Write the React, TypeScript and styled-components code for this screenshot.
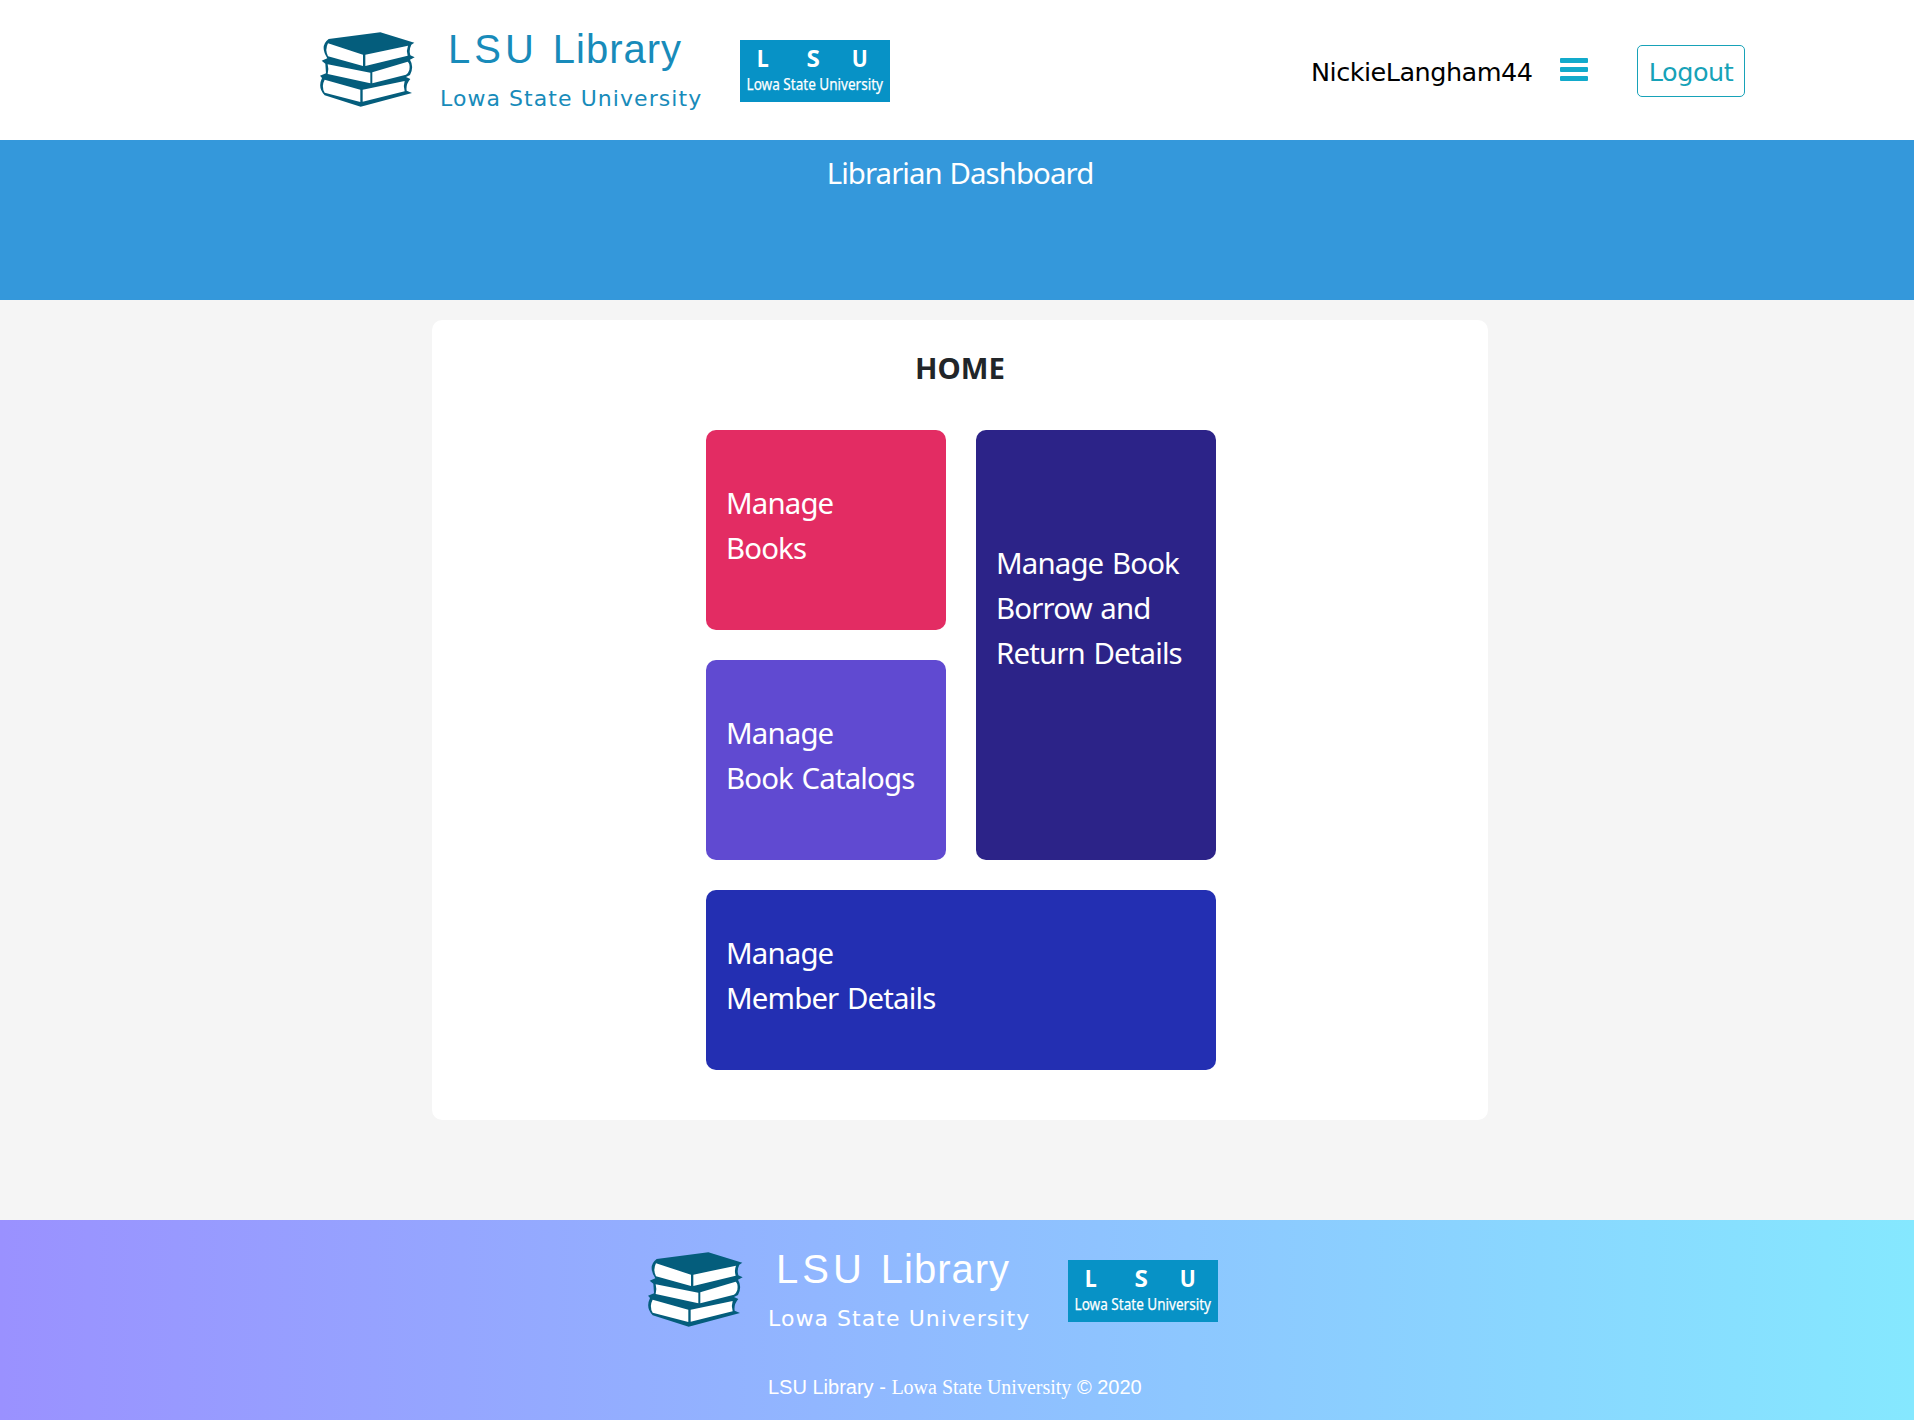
import React from 'react';
import styled, { createGlobalStyle } from 'styled-components';

const GlobalStyle = createGlobalStyle`
  * { box-sizing: border-box; }
  body { margin: 0; background: #f5f5f5; font-family: "Noto Sans", sans-serif; }
`;

const Page = styled.div`
  width: 1914px;
  height: 1420px;
  display: flex;
  flex-direction: column;
  overflow: hidden;
`;

const Header = styled.header`
  height: 140px;
  background: #fff;
  display: flex;
  justify-content: space-between;
  padding: 0 169px 0 320px;
`;

const BrandRow = styled.div`
  height: 140px;
  display: flex;
  align-items: flex-start;
`;

const Books = styled.svg`
  width: 96px;
  height: 78px;
  margin-top: 30px;
  flex: none;
`;

const BrandText = styled.div<{ $color: string }>`
  width: 300px;
  margin-left: 24px;
  padding-top: 26px;
  color: ${(p) => p.$color};
  white-space: nowrap;
`;

const BrandName = styled.div`
  display: flex;
  gap: 15px;
  padding-left: 8px;
  font: 40px/46px "Liberation Sans", Arial, sans-serif;
  letter-spacing: 1px;
`;

const Initials = styled.span`
  letter-spacing: 4px;
`;

const BrandSub = styled.div`
  margin-top: 14px;
  font: 22px/26px "DejaVu Sans", Verdana, sans-serif;
  letter-spacing: 1.06px;
`;

const BadgeSvg = styled.svg`
  width: 150px;
  height: 62px;
  margin-top: 40px;
  flex: none;
  overflow: visible;
  font-family: "Noto Sans", sans-serif;
`;

const Account = styled.div`
  display: flex;
  align-items: flex-start;
  padding-top: 45px;
  font: 25.5px/50px "DejaVu Sans", Verdana, sans-serif;
  letter-spacing: -0.5px;
`;

const UserName = styled.span`
  width: 249px;
  padding-top: 2px;
  color: #000;
`;

const MenuIcon = styled.svg`
  width: 28px;
  height: 23px;
  margin-top: 13px;
`;

const Logout = styled.button`
  width: 108px;
  height: 52px;
  margin-left: 49px;
  padding: 1px 0 0;
  border: 1px solid #17a2b8;
  border-radius: 5px;
  background: #fff;
  color: #17a2b8;
  font: inherit;
  letter-spacing: inherit;
`;

const Banner = styled.div`
  height: 160px;
  padding: 11px 0 0 6px;
  background: #3498db;
  color: #fff;
  text-align: center;
  font-size: 29.4px;
  line-height: 45px;
  letter-spacing: -0.93px;
  word-spacing: 1px;
`;

const Main = styled.main`
  height: 920px;
  padding: 20px 0 0 432px;
`;

const Card = styled.section`
  width: 1056px;
  height: 800px;
  border-radius: 10px;
  background: #fff;
`;

const Title = styled.h1`
  margin: 0;
  padding-top: 26px;
  height: 110px;
  text-align: center;
  color: #212529;
  font-size: 29.4px;
  line-height: 45px;
  font-weight: 700;
`;

const Tiles = styled.div`
  display: grid;
  grid-template-columns: 240px 240px;
  grid-template-rows: 200px 200px 180px;
  gap: 30px;
  padding-left: 274px;
`;

const Tile = styled.a<{ $bg: string; $top: number; $area: string }>`
  grid-area: ${(p) => p.$area};
  padding: ${(p) => p.$top}px 0 0 20px;
  border-radius: 10px;
  background: ${(p) => p.$bg};
  color: #fff;
  font-size: 29.4px;
  line-height: 45px;
  letter-spacing: -0.85px;
  word-spacing: 1.8px;
  white-space: pre-line;
`;

const Footer = styled.footer`
  height: 200px;
  display: flex;
  flex-direction: column;
  padding-left: 648px;
  background: linear-gradient(to right, #9a91ff, #85e8ff);
`;

const Copyright = styled.p`
  margin: 0;
  padding: 15px 0 0 120px;
  color: #fff;
  font: 20px/24px "Liberation Sans", Arial, sans-serif;
`;

const Serif = styled.span`
  font-family: "Liberation Serif", "Times New Roman", serif;
`;

const tiles = [
  { label: 'Manage\nBooks', bg: '#e32c63', top: 51, area: '1 / 1' },
  { label: 'Manage Book\nBorrow and\nReturn Details', bg: '#2c2388', top: 111, area: '1 / 2 / 3 / 3' },
  { label: 'Manage\nBook Catalogs', bg: '#604ad1', top: 51, area: '2 / 1' },
  { label: 'Manage\nMember Details', bg: '#232fb2', top: 41, area: '3 / 1 / 4 / 3' },
];

function BooksIcon() {
  return (
    <Books viewBox="30 30 288 234">
      <path
        fill="#045d7c"
        d="M56 57 L211 37 L313 68 L304 74 Q296 90 301 106 L314 112 L300 119 Q313 140 300 165 L288 171 L301 177 Q287 193 290 212 L306 219 L152 260 L44 226 Q22 204 36 174 L30 167 L48 160 L46 131 L35 122 L52 115 Q28 78 56 57 Z"
      />
      <g fill="#fff">
        <path d="M54 70 L159 104 L159 138 L54 109 Q44 89 54 70 Z" />
        <path d="M166 104 L294 77 Q288 92 293 107 L166 138 Z" />
        <path d="M53 133 L181 158 L181 190 L53 162 Q57 147 53 133 Z" />
        <path d="M187 157 L293 125 Q301 130 298 150 Q295 160 288 164 L187 190 Z" />
        <path d="M44 179 L151 209 L151 246 L44 218 Q33 199 44 179 Z" />
        <path d="M158 209 L284 183 Q279 198 284 214 L158 245 Z" />
      </g>
    </Books>
  );
}

function Badge() {
  return (
    <BadgeSvg viewBox="0 0 150 62">
      <rect width="150" height="62" fill="#0792c6" />
      <g fill="#fff">
        <g fontSize="22.5" fontWeight="700">
          <text x="16.8" y="26.8" textLength="12" lengthAdjust="spacingAndGlyphs">L</text>
          <text x="66.5" y="26.8" textLength="13.4" lengthAdjust="spacingAndGlyphs">S</text>
          <text x="111.8" y="26.8" textLength="16" lengthAdjust="spacingAndGlyphs">U</text>
        </g>
        <text
          x="6.6"
          y="50.4"
          fontSize="17"
          textLength="136.4"
          lengthAdjust="spacingAndGlyphs"
          stroke="#fff"
          strokeWidth="0.25"
        >
          Lowa State University
        </text>
      </g>
    </BadgeSvg>
  );
}

function Brand({ color }: { color: string }) {
  return (
    <BrandRow>
      <BooksIcon />
      <BrandText $color={color}>
        <BrandName>
          <Initials>LSU</Initials>
          <span>Library</span>
        </BrandName>
        <BrandSub>Lowa State University</BrandSub>
      </BrandText>
      <Badge />
    </BrandRow>
  );
}

export default function App() {
  return (
    <Page>
      <GlobalStyle />
      <Header>
        <Brand color="#188bba" />
        <Account>
          <UserName>NickieLangham44</UserName>
          <MenuIcon viewBox="0 0 28 23" fill="#12aacb">
            <rect width="28" height="5" rx="1" />
            <rect y="9" width="28" height="5" rx="1" />
            <rect y="18" width="28" height="5" rx="1" />
          </MenuIcon>
          <Logout>Logout</Logout>
        </Account>
      </Header>
      <Banner>Librarian Dashboard</Banner>
      <Main>
        <Card>
          <Title>HOME</Title>
          <Tiles>
            {tiles.map((t) => (
              <Tile key={t.label} $bg={t.bg} $top={t.top} $area={t.area}>
                {t.label}
              </Tile>
            ))}
          </Tiles>
        </Card>
      </Main>
      <Footer>
        <Brand color="#fff" />
        <Copyright>
          LSU Library - <Serif>Lowa State University</Serif> © 2020
        </Copyright>
      </Footer>
    </Page>
  );
}
